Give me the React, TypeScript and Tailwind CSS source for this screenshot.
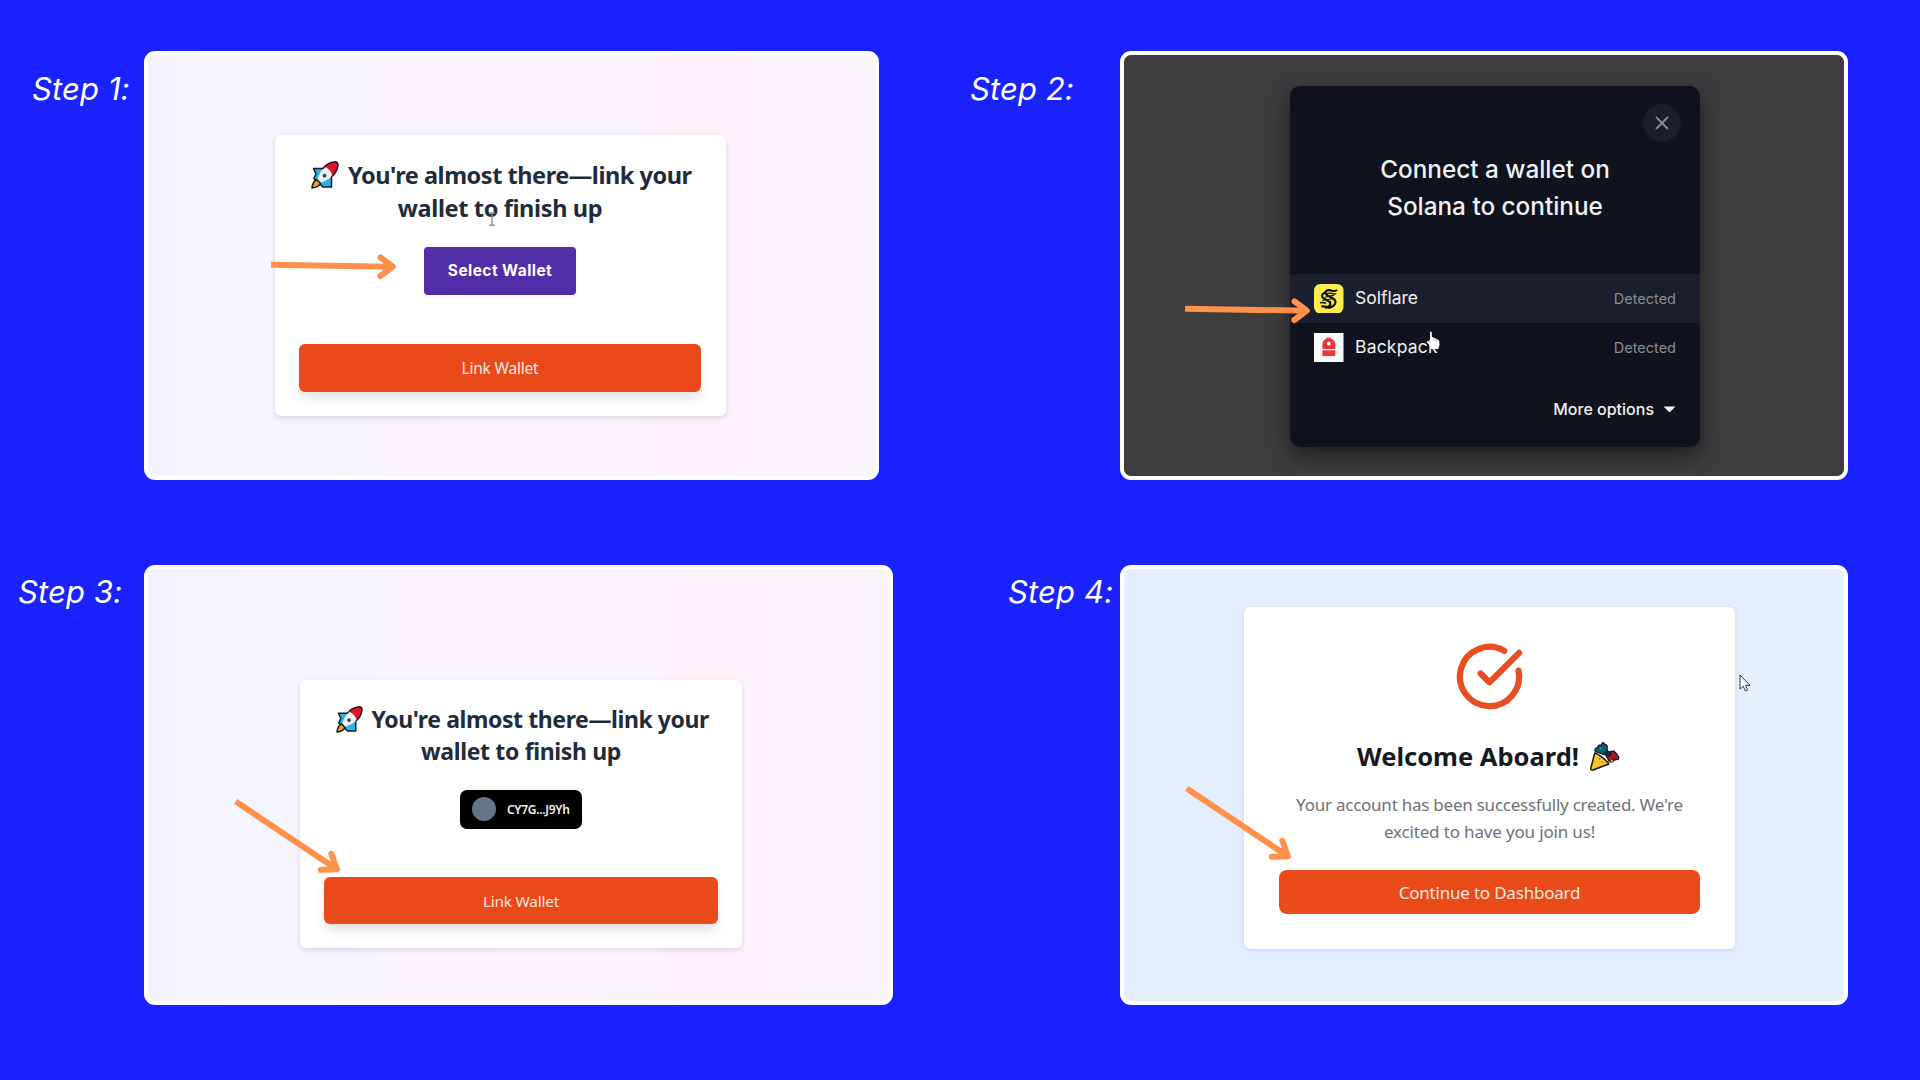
import React from "react";
import type { ReactNode } from "react";

function Rocket({ className }: { className: string }) {
  return (
    <svg viewBox="0 0 28 28" className={className} fill="none">
      <path
        d="M2.500 7.500H11L20.500 17v9h-8.500L2.800 17.500 5 13z"
        fill="#1fb5e6"
        stroke="#16181d"
        strokeWidth="1.500"
        strokeLinejoin="round"
      />
      <path
        d="M5.600 18.500C2.600 20.300 1.300 23.300 1 27c3.700-.3 6.800-1.500 8.500-4.500z"
        fill="#f79a1e"
        stroke="#16181d"
        strokeWidth="1.500"
        strokeLinejoin="round"
      />
      <path d="M6.500 18C8 13 11 8 15 4.500l8.500 8.500C20 17 15 20 10 21.500z" fill="#eff0f3" />
      <path
        d="M13.500 6C16 3 19.500 1.300 23 .9c3-.3 4.200 1 3.900 3.900-.5 3.700-2.400 7-5.400 9.800-1-4-4-7.300-8-8.600z"
        fill="#e3122b"
      />
      <path
        d="M11.500 7.800C14.500 3.800 18.500 1.400 23 .9c3-.3 4.200 1 3.900 3.900-.6 4.200-2.800 8-6.600 11.200"
        stroke="#16181d"
        strokeWidth="1.500"
      />
      <circle cx="13.500" cy="14.700" r="1.900" fill="#3c4148" />
    </svg>
  );
}

function PartyPopper() {
  return (
    <svg viewBox="0 0 30 30" className="h-[30px] w-[30px]" fill="none">
      <path
        d="M5.500 10.500c-1.500-2 .2-4 2.200-3.500C7.500 4.500 10 3.200 11.500 4.800 11 2 14 .2 14.700 3.500c2.300.3 3.500 2.300 2 4.200 1.500 1.300 1 3.300-.7 3.300l-2.500 2.500z"
        fill="#12616f"
        stroke="#15171c"
        strokeWidth="1.300"
        strokeLinejoin="round"
      />
      <path
        d="M16 14.500c2-3.300 5-4.500 8-4.300 1.200 1.800 3 1.800 3.300 4 1.700 1 2 2.700.7 4.300-1.600-.8-2.300 1-4 .5-.6 2.300-3.500 2.700-5 1z"
        fill="#9c1f27"
        stroke="#15171c"
        strokeWidth="1.300"
        strokeLinejoin="round"
      />
      <path d="m14 13.500 3.500-3.300 3.500 1.200-1.300 4z" fill="#23294f" stroke="#15171c" />
      <path
        d="M4.800 12C7 12.300 16.800 19 18.800 23L3 29c-1.500.4-2.500-.6-2.200-2z"
        fill="#fbc02f"
        stroke="#15171c"
        strokeWidth="1.500"
        strokeLinejoin="round"
      />
      <circle cx="9.500" cy="17.800" r="1.100" fill="#f0772b" />
      <circle cx="12.200" cy="21" r="1" fill="#7fae74" />
      <circle cx="6" cy="23" r=".9" fill="#f3d35b" />
      <circle cx="11" cy="7.500" r="1.100" fill="#2a8fd0" />
      <circle cx="22" cy="20.300" r="1.200" fill="#e9a52a" />
    </svg>
  );
}

function CheckBadge() {
  return (
    <svg
      viewBox="0 0 24 24"
      className="h-[71px] w-[71px]"
      fill="none"
      stroke="#e84e20"
      strokeWidth="2.100"
      strokeLinecap="round"
      strokeLinejoin="round"
    >
      <path d="M21.801 10A10 10 0 1 1 17 3.335" />
      <path d="m9 11 3 3L22 4" />
    </svg>
  );
}

function SolflareIcon() {
  return (
    <svg viewBox="0 0 30 30" className="h-[29.500px] w-[29.500px]" fill="none">
      <rect width="30" height="30" rx="6.500" fill="#fcec4c" />
      <g stroke="#0b0b10" strokeLinejoin="round">
        <path d="M23.500 6c-1.500 1.600-3 1.300-5 .8-3.200-.9-5.700-.7-6.700 1-.9 1.800.7 3 2.700 4.200l4.500 2.500c2.500 1.500 3.500 3.200 2.500 5.500-1 2.200-3.500 3.800-6.500 4" strokeWidth="2.100" />
        <path d="M22.500 9.600c-1.800 1-3 .6-5 0-2-.6-4-.3-4.500 1" strokeWidth="1.300" />
        <path d="M11.500 8.500c-2.300 1-4 3-3 4.800 1 1.600 4.500 2.700 6.500 4.200 2 1.600 2 4 0 5.200-2.500 1.500-4.700-.8-7.500.3" strokeWidth="2.100" />
        <path d="M6 19.200c2.500-1.300 4 .3 6.500.3M11 24.500c2.500-1 3.500.3 5.500-.8" strokeWidth="1.400" />
        <path d="m11 13.500 9.500-2.200M8.500 16.800l11-2M17 17v5.500" strokeWidth="1.100" />
      </g>
    </svg>
  );
}

function BackpackIcon() {
  return (
    <svg viewBox="0 0 30 30" className="h-[29.500px] w-[29.500px]">
      <rect width="30" height="30" fill="#fdfcfd" />
      <path d="M12.300 6.200V5c0-.9.700-1.200 1.500-1.200h2.400c.8 0 1.500.3 1.500 1.200v1.200z" fill="#f3a3a3" />
      <path d="M8.500 16.300V12c0-4 2.800-6.700 6.500-6.700s6.700 2.700 6.700 6.700v4.300z" fill="#e8383c" />
      <circle cx="15" cy="10.800" r="2" fill="#fff" />
      <path d="M8.500 17.600h13.200v4.600c0 .8-.5 1.300-1.300 1.300H9.800c-.8 0-1.300-.5-1.300-1.300z" fill="#e8383c" />
    </svg>
  );
}

function StraightArrow({ className }: { className: string }) {
  return (
    <svg viewBox="0 0 126 26" className={`absolute h-[26px] w-[126px] ${className}`} fill="none" stroke="#ff914d" strokeWidth="6">
      <path d="M0 10.700 121 12.700" />
      <path d="m109.500 3.400 12.300 9.300-12.500 9.300" strokeLinecap="round" strokeLinejoin="round" />
    </svg>
  );
}

function SlantedArrow({ className }: { className: string }) {
  return (
    <svg viewBox="0 0 110 78" className={`absolute h-[78px] w-[110px] ${className}`} fill="none" stroke="#ff914d" strokeWidth="6">
      <path d="M3.800 4.600 104.500 72" />
      <path d="m99.300 56.800 5.600 15.400-16 .6" strokeLinecap="round" strokeLinejoin="round" />
    </svg>
  );
}

function TextCursor() {
  return (
    <svg viewBox="0 0 8 14" className="absolute left-[340px] top-[157px] h-[14px] w-[8px]" fill="none" stroke="#85878b" strokeWidth="1.300">
      <path d="M1 1h2.200L4 1.800 4.800 1H7M4 1.500v11M1 13.200h6" />
    </svg>
  );
}

function HandCursor() {
  return (
    <svg viewBox="0 0 15 19" className="absolute left-[301.500px] top-[275.500px] h-[19px] w-[15px]">
      <path
        d="M4 1.200C4 .2 5.600.2 5.700 1.200L6 6l1.600.2.200.9 1.700-.1.300.9 1.500.1.400 1 1.500.6.300 4.400-1.200 4H6.200L4.700 15.500 1 11.300c-.6-.9.600-1.700 1.500-1.100l1.700 1.300z"
        fill="#fff"
      />
      <path d="M7.700 7v3M9.900 7.800v2.400M11.800 8.800v1.800" stroke="#9b9ca5" strokeWidth=".6" />
    </svg>
  );
}

function PointerCursor() {
  return (
    <svg viewBox="0 0 12 18" className="absolute left-[615px] top-[104.500px] h-[18px] w-[12px]">
      <path
        d="M1 1v14.200l3.300-3 2.100 4.700 2.200-.9-2.100-4.700H11z"
        fill="#fff"
        stroke="#33363c"
        strokeWidth="1"
        strokeLinejoin="round"
      />
    </svg>
  );
}

function StepLabel({ className, children }: { className: string; children: ReactNode }) {
  return (
    <h2
      className={`shrink-0 whitespace-nowrap font-[Inter,sans-serif] text-[31px] leading-[40px] italic tracking-[0.150px] text-white ${className}`}
    >
      {children}
    </h2>
  );
}

function Panel({ className, children }: { className: string; children: ReactNode }) {
  return (
    <section className={`relative flex shrink-0 items-start rounded-[11px] border-4 border-white ${className}`}>
      {children}
    </section>
  );
}

const lightGradient =
  "bg-[linear-gradient(to_right,#f4f4ff_0%,#f6f4ff_24%,#f9f4fe_32%,#faf5fd_66%,#fdf1fa_72%,#fdf2fa_80%,#faf5fb_88%,#faf5fb_100%)]";

export default function App() {
  return (
    <main className="flex h-[1080px] w-[1920px] flex-col gap-[85px] overflow-hidden bg-[#1a22ff] pt-[51px] font-['Noto_Sans',sans-serif]">
      <div className="flex h-[429px] items-start">
        <StepLabel className="mt-[18px] w-36 pl-8">Step 1:</StepLabel>
        <Panel className={`h-[429px] w-[735px] ${lightGradient}`}>
          <div className="ml-[126.500px] mt-[79.500px] flex h-[281.500px] w-[451px] flex-col items-center rounded-md bg-white pt-[24.500px] shadow-[0_2px_5px_rgba(40,30,80,0.14)]">
            <h3 className="flex w-full flex-col text-[23.500px] font-bold leading-[32.500px] text-[#222b3a]">
              <span className="flex items-center gap-[9px] whitespace-nowrap pl-[36.500px] tracking-[-0.460px]">
                <Rocket className="h-7 w-7" />
                You're almost there—link your
              </span>
              <span className="text-center tracking-[-0.360px]">wallet to finish up</span>
            </h3>
            <button className="mt-[23px] h-12 w-[152.500px] rounded bg-[#512da8] font-[Inter,sans-serif] text-[15.500px] font-bold tracking-[0.430px] text-white">
              Select Wallet
            </button>
            <button className="mt-[48.500px] h-12 w-[402.500px] rounded-md bg-[#ea4a1a] pt-[2px] text-[15.500px] tracking-[-0.200px] text-[#fde9e1] shadow-[0_8px_12px_-2px_rgba(0,0,0,0.12)]">
              Link Wallet
            </button>
          </div>
          <StraightArrow className="left-[123px] top-[199px]" />
          <TextCursor />
        </Panel>

        <StepLabel className="mt-[18px] w-[241px] pl-[91px]">Step 2:</StepLabel>
        <Panel className="h-[429px] w-[728px] bg-[#3e3c3e]">
          <div className="ml-[166px] mt-[30.500px] flex h-[361px] w-[410px] flex-col rounded-[10px] bg-[#10131d] font-[Inter,sans-serif] text-[#f1f1f5] shadow-[0_8px_20px_rgba(0,0,0,0.500)]">
            <button className="ml-auto mr-[19px] mt-[18.500px] flex size-[38px] items-center justify-center rounded-full bg-[#1a1e2b]">
              <svg viewBox="0 0 14 14" className="size-3.5" stroke="#898b8d" strokeWidth="1.800">
                <path d="m1 1 12 12M13 1 1 13" />
              </svg>
            </button>
            <h3 className="mt-[9px] text-center text-[24.300px] font-medium leading-[37px]">
              Connect a wallet on
              <br />
              Solana to continue
            </h3>
            <ul className="mt-[49px] text-[17.500px]">
              <li className="flex h-[49px] items-center gap-[11.500px] bg-[#1b1f2d] pl-6 pr-6">
                <SolflareIcon />
                <span>Solflare</span>
                <span className="ml-auto text-[14.500px] text-[#8a8c95]">Detected</span>
              </li>
              <li className="flex h-[49px] items-center gap-[11.500px] pl-6 pr-6">
                <BackpackIcon />
                <span className="tracking-[0.200px]">Backpack</span>
                <span className="ml-auto text-[14.500px] text-[#8a8c95]">Detected</span>
              </li>
            </ul>
            <button className="mr-[24px] mt-[25px] flex items-center gap-[9px] self-end text-[16px] font-medium leading-6">
              More options
              <svg viewBox="0 0 13 7" className="h-[7px] w-[13px]" fill="#f1f1f5">
                <path d="M.5.5h12L7.200 5.800q-.7.500-1.400 0z" />
              </svg>
            </button>
          </div>
          <StraightArrow className="left-[60.500px] top-[243px]" />
          <HandCursor />
        </Panel>
      </div>

      <div className="flex h-[440px] items-start">
        <StepLabel className="mt-[7px] w-36 pl-[18px]">Step 3:</StepLabel>
        <Panel className={`h-[440px] w-[749px] ${lightGradient}`}>
          <div className="ml-[152px] mt-[110.500px] flex h-[268px] w-[442px] flex-col items-center rounded-md bg-white pt-[24.500px] shadow-[0_2px_5px_rgba(40,30,80,0.14)]">
            <h3 className="flex w-full flex-col text-[23px] font-bold leading-[31.500px] text-[#222b3a]">
              <span className="flex items-center gap-[9px] whitespace-nowrap pl-[35.500px] tracking-[-0.410px]">
                <Rocket className="h-[27px] w-[27px]" />
                You're almost there—link your
              </span>
              <span className="text-center tracking-[-0.350px]">wallet to finish up</span>
            </h3>
            <div className="mt-[22.500px] flex h-[39.500px] w-[122px] items-center gap-[11px] rounded-[7px] bg-black pl-3">
              <span className="size-6 shrink-0 rounded-full bg-[#64748b]" />
              <span className="whitespace-nowrap pt-px text-[12px] font-semibold tracking-[-0.300px] text-[#f2f0ee]">
                CY7G...J9Yh
              </span>
            </div>
            <button className="mt-12 h-[47px] w-[394.500px] rounded-md bg-[#ea4a1a] pt-px text-[15.300px] tracking-[-0.200px] text-[#fde9e1] shadow-[0_8px_12px_-2px_rgba(0,0,0,0.12)]">
              Link Wallet
            </button>
          </div>
          <SlantedArrow className="left-[84px] top-[228px]" />
        </Panel>

        <StepLabel className="mt-[7px] w-[227px] pl-[115px]">Step 4:</StepLabel>
        <Panel className="h-[440px] w-[728px] bg-linear-to-b from-[#e6effd] to-[#e2edfd]">
          <div className="ml-[120px] mt-[37.500px] flex h-[342.500px] w-[491px] flex-col items-center rounded-md bg-white pt-[34.500px] shadow-[0_1px_4px_rgba(60,50,110,0.14)]">
            <CheckBadge />
            <h3 className="mt-[26px] flex items-center gap-[11px] whitespace-nowrap pr-[2px] text-[25.500px] font-bold leading-9 text-[#161822]">
              Welcome Aboard!
              <PartyPopper />
            </h3>
            <p className="mt-[18px] text-center text-[17px] leading-[26.500px] tracking-[-0.240px] text-[#6f7178]">
              Your account has been successfully created. We're
              <br />
              <span className="tracking-[-0.160px]">excited to have you join us!</span>
            </p>
            <button className="mt-[24.500px] h-[44.500px] w-[421px] rounded-lg bg-[#ea4a1a] pt-[2px] text-[17px] tracking-[-0.200px] text-[#fde9e1]">
              Continue to Dashboard
            </button>
          </div>
          <SlantedArrow className="left-[59px] top-[214.500px]" />
          <PointerCursor />
        </Panel>
      </div>
    </main>
  );
}
